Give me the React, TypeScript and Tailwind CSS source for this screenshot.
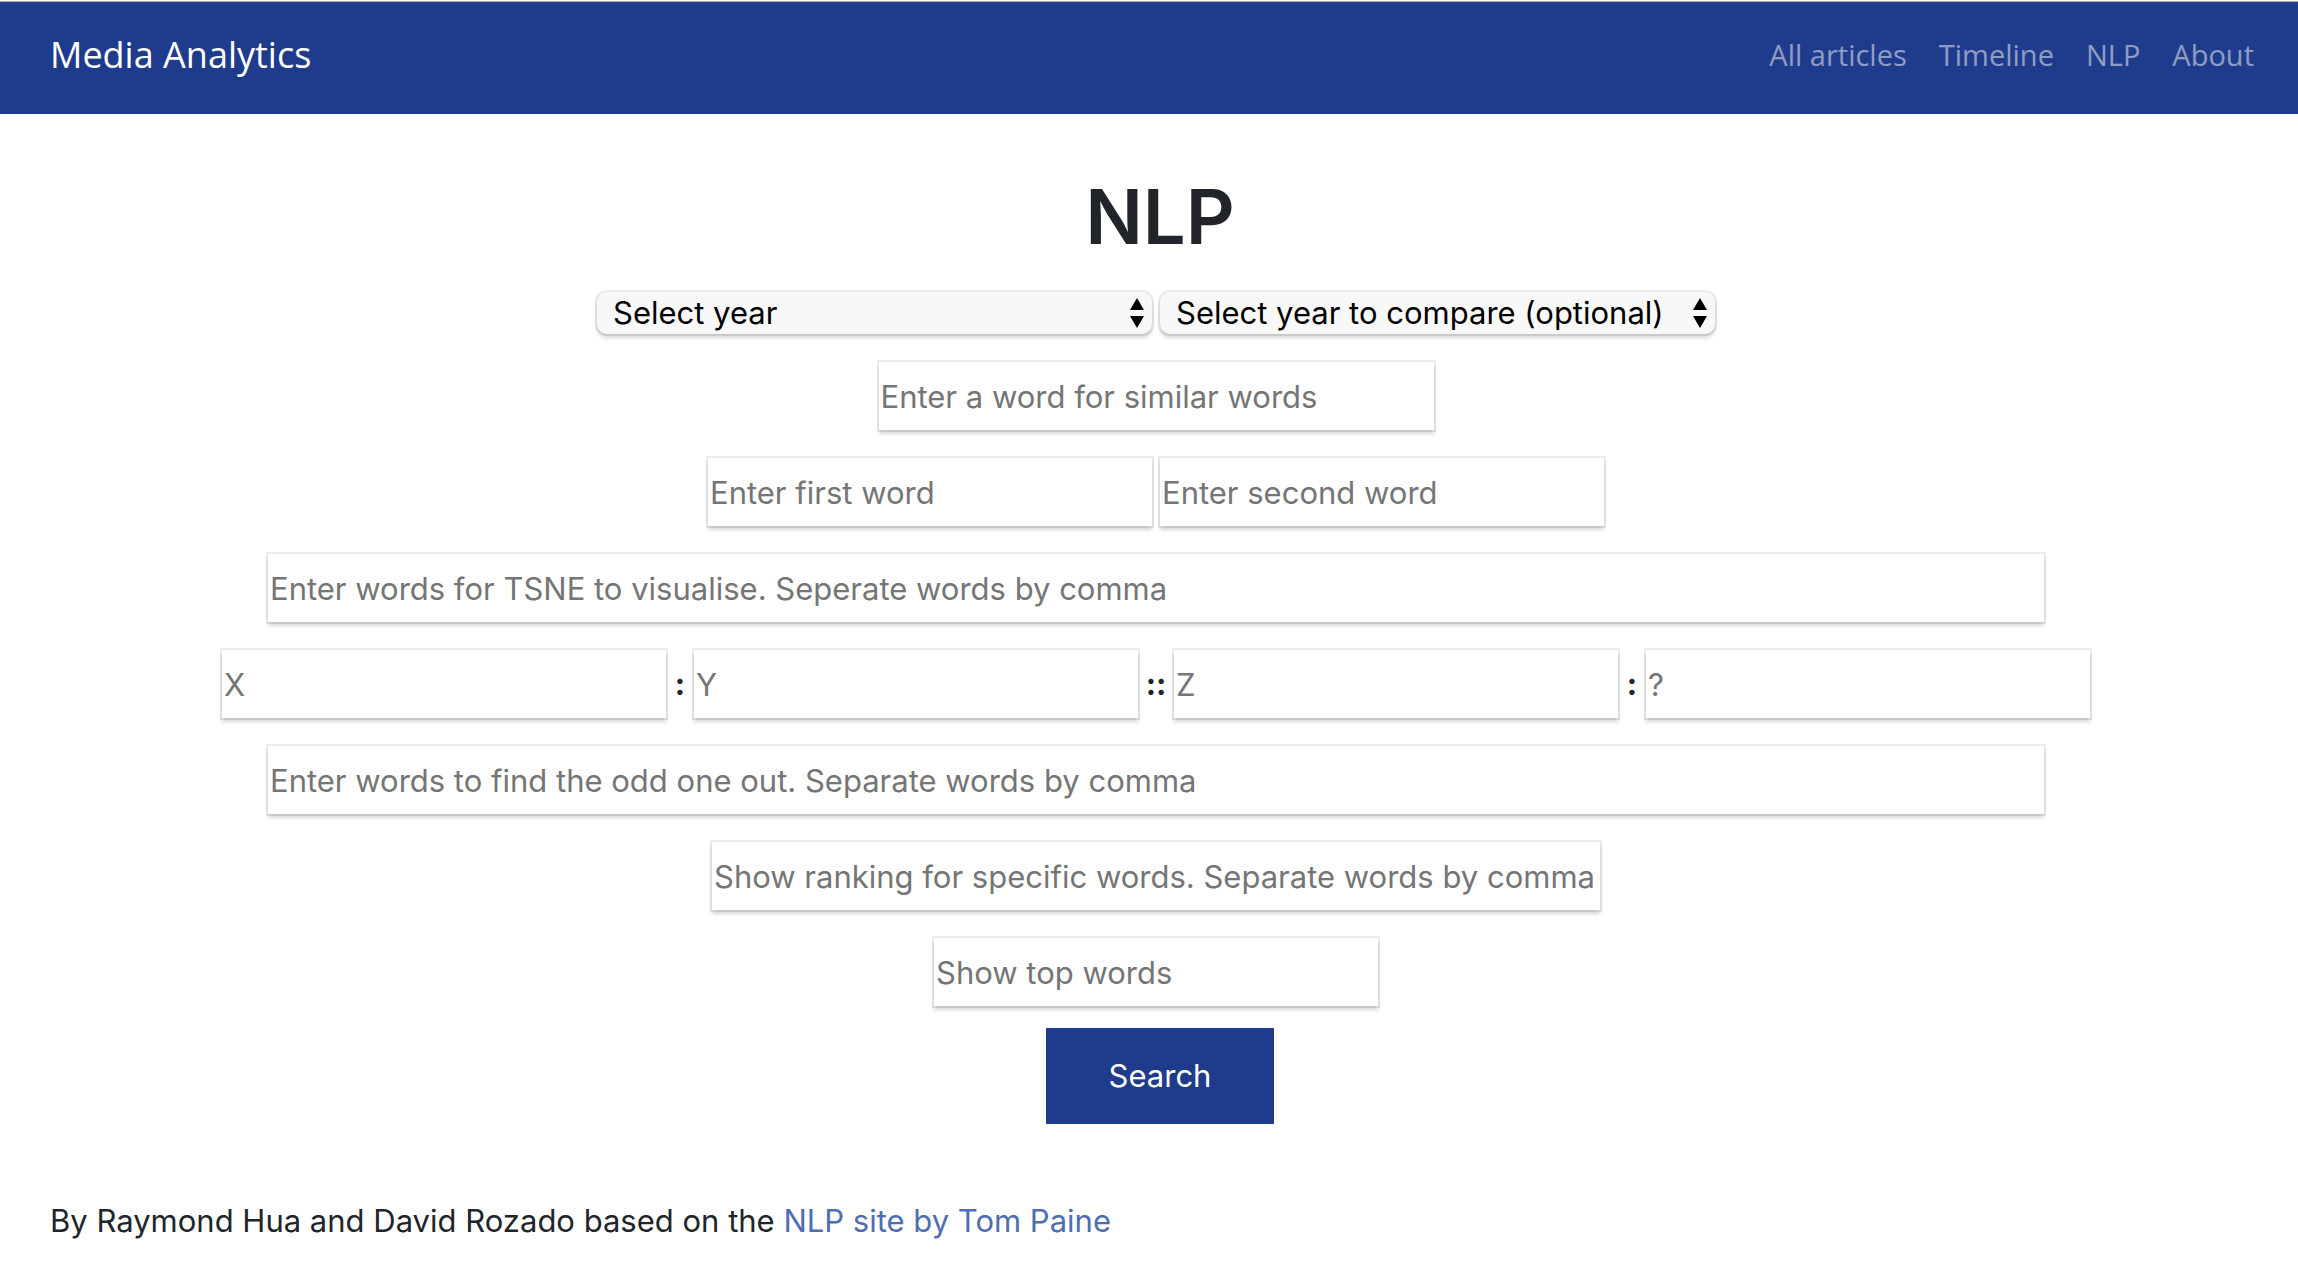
const navLinks = ["All articles", "Timeline", "NLP", "About"];

const ring = "shadow-[0_4px_4px_rgba(0,0,0,0.16),0_0_0_2px_rgba(0,0,0,0.08)]";

function Field({ label, width }: { label: string; width: string }) {
  return (
    <input
      type="text"
      aria-label={label}
      placeholder={label}
      className={`h-[68px] bg-white px-0.5 text-[31px] text-black placeholder:text-[#757575] outline-none ${ring} ${width}`}
    />
  );
}

function YearSelect({ label }: { label: string }) {
  return (
    <div className="relative w-1/4">
      <select
        aria-label={label}
        defaultValue=""
        className={`block h-[42px] w-full appearance-none rounded-[10px] bg-[#f8f8f8] pl-4 pr-10 text-[31px] leading-[42px] text-black outline-none ${ring}`}
      >
        <option value="">{label}</option>
        <option value="2018">2018</option>
        <option value="2019">2019</option>
      </select>
      <svg
        viewBox="0 0 14 30"
        aria-hidden="true"
        className="pointer-events-none absolute right-2 top-1.5 h-[30px] w-3.5"
      >
        <path d="M7 0 14 12H0ZM7 30 0 18H14Z" fill="#000" />
      </svg>
    </div>
  );
}

function Separator({ text, width }: { text: string; width: string }) {
  return <span className={`text-center text-[31px] font-bold ${width}`}>{text}</span>;
}

export default function App() {
  return (
    <div className="bg-white font-['Inter',sans-serif] text-[#212529]">
      <header className="mt-px flex h-[113px] items-center justify-between border-t border-[#a9adb3] bg-[#1f3b8c] pb-1.5 pl-[50px] pr-11 font-['Open_Sans',sans-serif]">
        <a href="#home" className="text-[36px] text-white">
          Media Analytics
        </a>
        <nav className="flex gap-8 text-[29px] text-white/50">
          {navLinks.map((name) => (
            <a key={name} href={`#${name}`}>
              {name}
            </a>
          ))}
        </nav>
      </header>

      <main className="ml-[46px] mr-8">
        <h1 className="mt-[54px] pl-2 text-center text-[76px] font-semibold leading-[96px]">NLP</h1>
        <form className="mt-7 flex flex-col gap-7">
          <div className="flex justify-center gap-2">
            <YearSelect label="Select year" />
            <YearSelect label="Select year to compare (optional)" />
          </div>
          <div className="flex justify-center">
            <Field label="Enter a word for similar words" width="w-1/4" />
          </div>
          <div className="flex justify-center gap-2">
            <Field label="Enter first word" width="w-1/5" />
            <Field label="Enter second word" width="w-1/5" />
          </div>
          <div className="flex justify-center">
            <Field label="Enter words for TSNE to visualise. Seperate words by comma" width="w-4/5" />
          </div>
          <div className="flex items-center justify-center">
            <Field label="X" width="w-1/5" />
            <Separator text=":" width="w-7" />
            <Field label="Y" width="w-1/5" />
            <Separator text="::" width="w-9" />
            <Field label="Z" width="w-1/5" />
            <Separator text=":" width="w-7" />
            <Field label="?" width="w-1/5" />
          </div>
          <div className="flex justify-center">
            <Field label="Enter words to find the odd one out. Separate words by comma" width="w-4/5" />
          </div>
          <div className="flex justify-center">
            <Field label="Show ranking for specific words. Separate words by comma" width="w-2/5" />
          </div>
          <div className="flex flex-col items-center gap-[22px]">
            <Field label="Show top words" width="w-1/5" />
            <button type="button" className="ml-2 w-[228px] bg-[#1f3b8c] text-[31px] leading-[96px] text-white">
              Search
            </button>
          </div>
        </form>
      </main>

      <footer className="mt-[73px] pb-7 pl-[50px] text-[31px] leading-[48px]">
        By Raymond Hua and David Rozado based on the{" "}
        <a href="#nlp-site" className="text-[#4f6db3]">
          NLP site by Tom Paine
        </a>
      </footer>
    </div>
  );
}
